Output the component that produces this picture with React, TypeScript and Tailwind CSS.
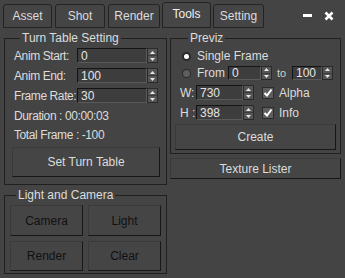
import React from "react";

function Spinner() {
  return (
    <div className="w-[11px] flex flex-col bg-[#555555] border border-[#2a2a2a]">
      <div className="flex-1 flex items-center justify-center border-b border-[#3a3a3a]">
        <svg width="5" height="3" viewBox="0 0 5 3">
          <path d="M0 3 L2.5 0 L5 3 Z" fill="#e8e8e8" />
        </svg>
      </div>
      <div className="flex-1 flex items-center justify-center">
        <svg width="5" height="3" viewBox="0 0 5 3">
          <path d="M0 0 L2.5 3 L5 0 Z" fill="#e8e8e8" />
        </svg>
      </div>
    </div>
  );
}

function NumField({ value, className }: { value: string; className: string }) {
  return (
    <div className={`flex ${className}`}>
      <div className="flex-1 flex items-center pl-[3px] bg-[#3d3d3d] border border-t-[#141414] border-l-[#141414] border-b-[#5a5a5a] border-r-[#5a5a5a] text-[#e4e4e4] text-[12px] leading-none">
        {value}
      </div>
      <Spinner />
    </div>
  );
}

function Btn({ label, className, dark }: { label: string; className: string; dark?: boolean }) {
  return (
    <div
      className={`flex items-center justify-center bg-[#454545] border border-t-[#3a3a3a] border-l-[#3a3a3a] border-b-[#171717] border-r-[#171717] ${className}`}
    >
      {dark ? <span className="text-[#111111]">{label}</span> : <span className="text-[#dcdcdc]">{label}</span>}
    </div>
  );
}

function Check({ label }: { label: string }) {
  return (
    <div className="flex items-center gap-[5px]">
      <div className="w-[12px] h-[12px] bg-[#5e5e5e] border border-[#2c2c2c] flex items-center justify-center">
        <svg width="10" height="10" viewBox="0 0 10 10">
          <path d="M1.5 5 L4 7.5 L8.5 1.5" stroke="#ffffff" strokeWidth="2" fill="none" />
        </svg>
      </div>
      <span className="text-[#dcdcdc] text-[12px]">{label}</span>
    </div>
  );
}

function Radio({ on }: { on?: boolean }) {
  return (
    <div className="w-[9px] h-[9px] rounded-full bg-[#2a2a2a] flex items-center justify-center">
      {on ? <div className="w-[5px] h-[5px] rounded-full bg-white" /> : <div className="w-[7px] h-[7px] rounded-full bg-[#5e5e5e]" />}
    </div>
  );
}

const tabs = [
  { name: "Asset", w: "w-[49px]" },
  { name: "Shot", w: "w-[50px]" },
  { name: "Render", w: "w-[52px]" },
  { name: "Tools", w: "w-[49px]", on: true },
  { name: "Setting", w: "w-[51px]" },
];

export default function App() {
  return (
    <div className="w-[345px] h-[278px] bg-[#444444] overflow-hidden font-['Liberation_Sans',Arial,sans-serif] text-[11px] text-[#dcdcdc] whitespace-nowrap">
      {/* Tab strip */}
      <div className="h-[28px] flex items-end pl-[3px] gap-[3px]">
        {tabs.map((t) =>
          t.on ? (
            <div
              key={t.name}
              className={`${t.w} -mx-[1px] h-[26px] pb-[2px] flex items-center justify-center border border-[#232323] rounded-t-[3px] bg-[#464646] text-[12px] text-[#f0f0f0]`}
            >
              {t.name}
            </div>
          ) : (
            <div
              key={t.name}
              className={`${t.w} h-[24px] flex items-center justify-center border border-[#232323] rounded-t-[3px] bg-[#454545] text-[12px] text-[#dcdcdc]`}
            >
              {t.name}
            </div>
          )
        )}
        <div className="flex-1 self-stretch flex items-center justify-end gap-[12px] pr-[11px] pt-[3px]">
          <svg width="9" height="9" viewBox="0 0 9 9">
            <rect x="0" y="3" width="9" height="3" fill="#ffffff" />
          </svg>
          <svg width="10" height="10" viewBox="0 0 10 10">
            <path d="M1.5 1.5 L8.5 8.5 M8.5 1.5 L1.5 8.5" stroke="#ffffff" strokeWidth="2.6" />
          </svg>
        </div>
      </div>

      <div className="flex pl-[4px] pt-[3px] gap-[3px]">
        {/* Left column */}
        <div className="w-[163px] flex flex-col gap-[3px]">
          <fieldset className="h-[154px] border border-[#202020] pl-[9px] pr-[6px] flex flex-col text-[12px] tracking-[-0.4px]">
            <legend className="ml-[6px] px-[2px] leading-[14px] text-[12px] tracking-normal text-[#dcdcdc]">Turn Table Setting</legend>
            <div className="flex flex-col gap-[5px] pt-[3px]">
              <div className="flex items-center h-[15px]">
                <span className="w-[63px]">Anim Start:</span>
                <NumField value="0" className="w-[81px] h-[15px] tracking-normal" />
              </div>
              <div className="flex items-center h-[15px]">
                <span className="w-[63px]">Anim End:</span>
                <NumField value="100" className="w-[81px] h-[15px] tracking-normal" />
              </div>
              <div className="flex items-center h-[15px]">
                <span className="w-[63px]">Frame Rate:</span>
                <NumField value="30" className="w-[81px] h-[15px] tracking-normal" />
              </div>
            </div>
            <div className="leading-[14px] mt-[6px]">Duration : 00:00:03</div>
            <div className="leading-[14px] mt-[5px]">Total Frame : -100</div>
            <Btn label="Set Turn Table" className="mt-[5px] -ml-[2px] h-[30px] tracking-normal" />
          </fieldset>

          <fieldset className="h-[86px] border border-[#202020] px-[5px] flex flex-col">
            <legend className="ml-[6px] px-[2px] leading-[14px] text-[12px] text-[#dcdcdc]">Light and Camera</legend>
            <div className="grid grid-cols-2 gap-x-[5px] gap-y-[5px] pt-[3px] text-[12px]">
              <Btn label="Camera" dark className="h-[31px]" />
              <Btn label="Light" dark className="h-[31px]" />
              <Btn label="Render" dark className="h-[30px]" />
              <Btn label="Clear" dark className="h-[30px]" />
            </div>
          </fieldset>
        </div>

        {/* Right column */}
        <div className="w-[171px] flex flex-col gap-[4px]">
          <fieldset className="h-[123px] border border-[#202020] pl-[11px] pr-[4px] flex flex-col">
            <legend className="ml-[6px] px-[2px] leading-[14px] text-[12px] text-[#dcdcdc]">Previz</legend>
            <div className="flex items-center gap-[6px] h-[14px] mt-[4px]">
              <Radio on />
              <span className="text-[12px]">Single Frame</span>
            </div>
            <div className="flex items-center h-[14px] mt-[3px]">
              <Radio />
              <span className="text-[12px] ml-[6px] w-[31px]">From</span>
              <NumField value="0" className="w-[44px] h-[14px]" />
              <span className="ml-[5px] w-[15px] text-[#cfcfcf]">to</span>
              <NumField value="100" className="w-[41px] h-[14px]" />
            </div>
            <div className="flex items-center h-[15px] mt-[5px] -ml-[2px]">
              <span className="text-[12px] w-[16px]">W:</span>
              <NumField value="730" className="w-[58px] h-[15px]" />
              <div className="ml-[8px]">
                <Check label="Alpha" />
              </div>
            </div>
            <div className="flex items-center h-[15px] mt-[5px] -ml-[2px]">
              <span className="text-[12px] w-[16px]">H :</span>
              <NumField value="398" className="w-[58px] h-[15px]" />
              <div className="ml-[8px]">
                <Check label="Info" />
              </div>
            </div>
            <Btn label="Create" className="mt-[4px] -ml-[7px] h-[26px] text-[12px]" />
          </fieldset>
          <Btn label="Texture Lister" className="h-[21px] text-[12px]" />
        </div>
      </div>
    </div>
  );
}
